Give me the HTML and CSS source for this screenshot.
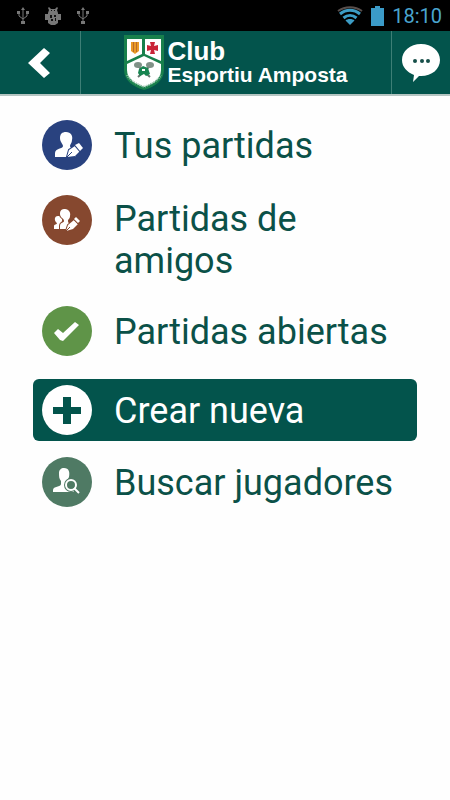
FILE: index.html
```
<!DOCTYPE html>
<html lang="es">
<head>
    <meta charset="UTF-8">
    <meta name="viewport" content="width=device-width, initial-scale=1.0">
    <title>Club Esportiu Amposta</title>
    <link rel="stylesheet" href="styles.css">
</head>
<body>
    <!-- Status bar -->
    <div class="status-bar">
        <div class="status-left">
            <svg class="usb" viewBox="0 0 12 18">
                <path d="M6 2v13M2 6v3l4 3 4-3V6" />
                <path class="solid" d="M6 0l2 3H4zM0 4h3v3H0zM9 4h3v3H9zM4 14h4v3H4z" />
            </svg>
            <svg class="droid" viewBox="0 0 16 18">
                <path d="M4 0l2 2h4l2-2 1 1-1 2 1 3v1h3v6h-3v3l-3 2H6l-3-2v-3H0V7h3V6l1-3-1-2z" />
                <path class="dark" d="M6 3h1v1H6zM9 3h1v1H9zM5 8h2v3H5zM9 8h2v2H9zM6 12h2v2H6zM10 11h1v3h-1z" />
            </svg>
            <svg class="usb" viewBox="0 0 12 18">
                <path d="M6 2v13M2 6v3l4 3 4-3V6" />
                <path class="solid" d="M6 0l2 3H4zM0 4h3v3H0zM9 4h3v3H9zM4 14h4v3H4z" />
            </svg>
        </div>
        <div class="status-right">
            <svg class="wifi" viewBox="0 0 26 19">
                <path class="weak" d="M1 5C8 0 18 0 25 5" />
                <path d="M3 8c6-5 14-5 20 0M6.500 12c4-3.500 9-3.500 13 0" />
                <path class="dot" d="M13 19l-4.500-4.500c2-2 7-2 9 0z" />
            </svg>
            <svg class="battery" viewBox="0 0 13 20">
                <path d="M4 0h5v2h4v18H0V2h4z" />
            </svg>
            <span>18:10</span>
        </div>
    </div>

    <!-- Header -->
    <header class="header">
        <button class="back" type="button" aria-label="Atrás">
            <svg viewBox="0 0 22 32">
                <path d="M16 1l6 5-10 10 10 10-6 5L0 16z" />
            </svg>
        </button>
        <div class="brand">
            <svg class="shield" viewBox="0 0 40 56">
                <path fill="#18804c" d="M0 0h40v35c0 10-9 17-20 20C9 52 0 45 0 35z" />
                <path fill="#fff" d="M3 4h15v15L3 26zM21 4h16v22l-16-7z" />
                <path fill="#fff" d="M20 21l17 8v6c0 9-8 14-17 17C11 49 3 44 3 35v-6z" />
                <path fill="#e99a27" d="M7 7h8v9l-4 3-4-3z" />
                <path stroke="#b96a28" d="M9.500 7v10M12.500 7v10" />
                <path fill="#c92437" d="M26 7h5l-1 4 4-1v6l-4-1 1 4h-5l1-4-4 1v-6l4 1z" />
                <path stroke="#65756d" stroke-width="2" d="M14 31l12 11M26 31L14 42" />
                <ellipse cx="14" cy="30" rx="4" ry="3" fill="#809187" />
                <ellipse cx="26" cy="30" rx="4" ry="3" fill="#809187" />
                <path fill="#188551" d="M15 34l4-3 5 2 2 6-4 2-2-2-4 2-2-3z" />
                <path fill="#fff" d="M18 34h3v2h-3z" />
                <path fill="none" stroke="#8fbfa5" stroke-width="2" stroke-dasharray="1 1" d="M3 40c3 6 10 9 17 12 7-3 14-6 17-12" />
            </svg>
            <h1 class="title">
                <span class="title-top">Club</span>
                <span class="title-bottom">Esportiu Amposta</span>
            </h1>
        </div>
        <button class="chat" type="button" aria-label="Mensajes">
            <svg viewBox="0 0 38 38">
                <path d="M19 0c11 0 19 7 19 16s-8 16-19 16h-2l-6 6 1-7C5 28 0 23 0 16 0 7 8 0 19 0z" />
                <circle cx="13" cy="17" r="2" />
                <circle cx="20" cy="17" r="2" />
                <circle cx="26" cy="17" r="2" />
            </svg>
        </button>
    </header>

    <!-- Menu -->
    <nav class="menu">
        <a class="item" href="#">
            <svg class="icon blue" viewBox="0 0 50 50">
                <circle cx="25" cy="25" r="25" />
                <path class="shape" d="M24 12c5 0 7 4 6 8 0 3-2 4-2 6 0 3 6 2 6 7v4H13v-4c0-5 8-4 8-7 0-2-3-4-3-8 0-4 2-6 6-6z" />
                <path class="shape edge" d="M25 37l2-7 6-4 5 5-5 5z" />
                <path class="shape edge" d="M33 25l4-2 4 5-3 3z" />
                <path class="line" d="M25 37l5-5" />
            </svg>
            <span class="label">Tus partidas</span>
        </a>
        <a class="item two-lines" href="#">
            <svg class="icon brown" viewBox="0 0 50 50">
                <circle cx="25" cy="25" r="25" />
                <path class="shape" d="M16 21c3 0 5 2 4 5l-1 3 4 2v3H12v-3c0-2 3-1 3-3-3-2-3-7 1-7z" />
                <path class="shape edge" d="M23 14c4 0 6 4 5 7 0 3-2 3-2 5 0 3 3 2 3 5v3H18v-3c0-4 4-3 4-5 0-3-4-3-4-7s2-5 5-5z" />
                <path class="shape edge" d="M24 36l2-6 6-5 4 4-5 5z" />
                <path class="shape edge" d="M32 24l2-2 4 4-2 2z" />
                <path class="line" d="M24 36l4-4" />
            </svg>
            <span class="label">Partidas de amigos</span>
        </a>
        <a class="item" href="#">
            <svg class="icon green" viewBox="0 0 50 50">
                <circle cx="25" cy="25" r="25" />
                <path class="shape" d="M12 27l4-4 5 4 12-11 4 3-16 16-3-1z" />
            </svg>
            <span class="label">Partidas abiertas</span>
        </a>
        <a class="item active" href="#">
            <svg class="icon white" viewBox="0 0 50 50">
                <circle cx="25" cy="25" r="25" />
                <path class="plus" d="M21 12h8v10h10v7H29v10h-8V29H11v-7h10z" />
            </svg>
            <span class="label">Crear nueva</span>
        </a>
        <a class="item" href="#">
            <svg class="icon gray" viewBox="0 0 50 50">
                <circle cx="25" cy="25" r="25" />
                <path class="shape" d="M22 11c5 0 6 4 5 9l-2 4v3c0 3 7 2 7 5v3H11v-2c0-4 8-3 8-6v-3c-2-2-2-5-2-8 0-3 2-5 5-5z" />
                <circle class="halo" cx="29" cy="28" r="5" />
                <path class="halo" d="M32 31l4 4" />
                <circle class="lens" cx="29" cy="28" r="5" />
                <path class="lens" d="M32 31l5 5" />
            </svg>
            <span class="label">Buscar jugadores</span>
        </a>
    </nav>
</body>
</html>
```
FILE: styles.css
```
body {
    margin: 0;
    background-color: #fefefe;
    font-family: Roboto, sans-serif;
}

/* Status bar */
.status-bar {
    display: flex;
    justify-content: space-between;
    align-items: center;
    height: 31px;
    padding: 0 8px 0 17px;
    background-color: #000;
}
.status-left,
.status-right {
    display: flex;
    align-items: center;
}
.status-left {
    gap: 16px;
}
.status-right {
    gap: 8px;
    color: #4aa5cf;
    font-size: 20px;
    line-height: 24px;
}
.usb {
    width: 12px;
    height: 18px;
    fill: none;
    stroke: #777;
    stroke-width: 1;
}
.usb .solid {
    fill: #777;
    stroke: none;
}
.droid {
    width: 16px;
    height: 18px;
    fill: #777;
}
.droid .dark {
    fill: #111;
}
.wifi {
    width: 26px;
    height: 19px;
    fill: none;
    stroke: #3c9cc5;
    stroke-width: 3;
}
.wifi .weak {
    stroke: #594f4c;
    stroke-width: 2;
}
.wifi .dot {
    fill: #3c9cc5;
    stroke: none;
}
.battery {
    width: 13px;
    height: 20px;
    fill: #3b9bc8;
}

/* Header */
.header {
    display: flex;
    height: 63px;
    background-color: #03544c;
    border-bottom: 2px solid #b5c5c2;
}
.header button {
    display: flex;
    align-items: center;
    justify-content: center;
    padding: 0;
    border: none;
    background: none;
    cursor: pointer;
}
.header .back {
    width: 81px;
    padding-right: 2px;
    border-right: 1px solid #3d7f76;
}
.back svg {
    width: 22px;
    height: 32px;
    fill: #fff;
}
.header .chat {
    width: 59px;
    border-left: 1px solid #3d7f76;
}
.chat svg {
    width: 38px;
    height: 38px;
    fill: #fff;
}
.chat circle {
    fill: #164f49;
}
.brand {
    display: flex;
    flex: 1;
    justify-content: center;
    align-items: center;
    gap: 3px;
}
.shield {
    width: 40px;
    height: 56px;
    fill: none;
}
.title {
    margin: 0;
    color: #fff;
    font-family: "Liberation Sans", Arial, sans-serif;
    font-weight: bold;
    line-height: 24px;
}
.title span {
    display: block;
}
.title-top {
    font-size: 26px;
}
.title-bottom {
    font-size: 21px;
}

/* Menu */
.menu {
    padding: 18px 33px;
}
.item {
    display: flex;
    align-items: flex-start;
    gap: 22px;
    margin-bottom: 13px;
    padding: 6px 9px;
    border-radius: 6px;
    color: #0b5148;
    text-decoration: none;
}
.item.active {
    margin: 17px 0 10px;
    background-color: #03544c;
    color: #fff;
}
.label {
    padding-top: 5px;
    font-size: 36px;
    line-height: 42px;
}
.two-lines {
    margin-bottom: 12px;
}
.two-lines .label {
    padding-top: 3px;
}
.icon {
    flex: none;
    width: 50px;
    height: 50px;
}
.blue {
    fill: #29427f;
    stroke: #29427f;
}
.brown {
    fill: #86482f;
    stroke: #86482f;
}
.green {
    fill: #5f9448;
}
.white {
    fill: #fff;
}
.gray {
    fill: #4f7a64;
    stroke: #4f7a64;
}
.icon circle,
.icon .shape {
    stroke: none;
}
.icon .shape {
    fill: #fff;
}
/* outline goes behind the fill, so the pen stays its full size */
.icon .edge {
    stroke: inherit;
    stroke-width: 2;
    paint-order: stroke;
}
.icon .plus {
    fill: #03544c;
}
.icon .halo {
    stroke: inherit;
    stroke-width: 4;
}
.icon .lens {
    fill: none;
    stroke: #fff;
    stroke-width: 2;
}
```
